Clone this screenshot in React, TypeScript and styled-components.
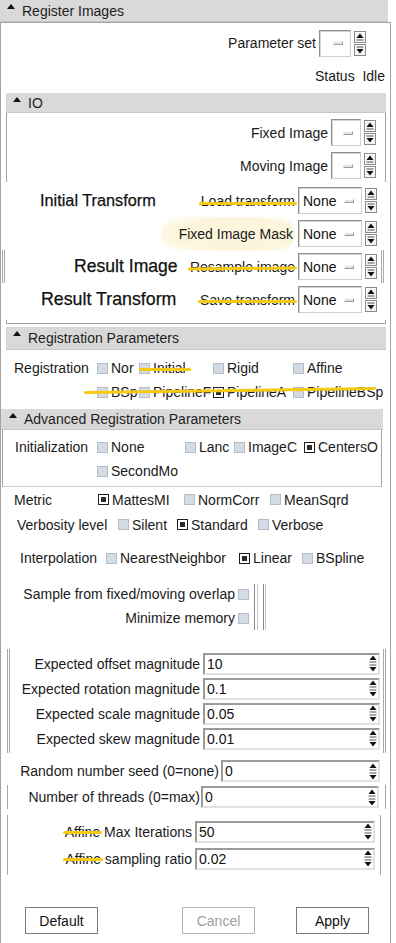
import React from "react";
import styled, { createGlobalStyle, css } from "styled-components";

const GlobalStyle = createGlobalStyle`
  html, body {
    margin: 0;
    padding: 0;
    background: #fff;
  }
  body {
    font-family: "Liberation Sans", Arial, sans-serif;
    font-size: 14px;
    color: #1a1a1a;
  }
`;

const Page = styled.div`
  width: 396px;
  height: 943px;
  overflow: hidden;
  background: #fff;
`;

const Bar = styled.div<{ $left?: number; $right?: number; $h?: number; $pad?: number }>`
  box-sizing: border-box;
  display: flex;
  align-items: center;
  gap: 7px;
  height: ${(p) => p.$h ?? 21}px;
  margin: 0 ${(p) => p.$right ?? 0}px 0 ${(p) => p.$left ?? 0}px;
  padding-left: ${(p) => p.$pad ?? 7}px;
  background: #d9d9d9;
  border-bottom: 1px solid #c6c6c6;
  font-size: 14px;
  color: #1e1e1e;
  white-space: nowrap;
`;

const Caret = styled.span`
  flex: none;
  width: 0;
  height: 0;
  border-left: 4px solid transparent;
  border-right: 4px solid transparent;
  border-bottom: 5px solid #111;
  align-self: flex-start;
  margin-top: 4px;
`;

const MainFrame = styled.div`
  box-sizing: border-box;
  width: 391px;
  height: 922px;
  border: 1px solid #a2a2a2;
  border-bottom: none;
`;

const RightRow = styled.div<{ $h: number; $pr: number }>`
  display: flex;
  align-items: center;
  justify-content: flex-end;
  gap: 3px;
  height: ${(p) => p.$h}px;
  padding-right: ${(p) => p.$pr}px;
  white-space: nowrap;
`;

const Combo = styled.div<{ $w: number }>`
  box-sizing: border-box;
  flex: none;
  width: ${(p) => p.$w}px;
  height: 27px;
  display: flex;
  align-items: center;
  justify-content: space-between;
  padding: 0 7px 0 4px;
  background: #fff;
  border: 1px solid #8e8e8e;
  border-right-color: #cfcfcf;
  border-bottom-color: #cfcfcf;
  box-shadow: inset 1px 1px 0 #d4d4d4;
  font-size: 14px;
  color: #111;
`;

const Dash = styled.span`
  box-sizing: border-box;
  width: 10px;
  height: 4px;
  margin-left: auto;
  background: #e4e4e4;
  border: 1px solid;
  border-color: #fafafa #9a9a9a #9a9a9a #fafafa;
`;

const SpinCol = styled.div`
  flex: none;
  display: flex;
  flex-direction: column;
  gap: 1px;
`;

const SpinBtn = styled.div`
  box-sizing: border-box;
  width: 12px;
  height: 12px;
  display: flex;
  align-items: center;
  justify-content: center;
  background: #f4f4f4;
  border: 1px solid #8a8a8a;
  box-shadow: inset 1px 1px 0 #fff;
`;

const Arrow = ({ down }: { down?: boolean }) => (
  <svg width="8" height="8" viewBox="0 0 8 8">
    {down ? (
      <>
        <line x1="0.5" y1="1" x2="7.5" y2="1" stroke="#555" strokeWidth="1" />
        <polygon points="0.5,3 7.5,3 4,7.5" fill="#111" />
      </>
    ) : (
      <>
        <polygon points="4,0.5 7.5,5 0.5,5" fill="#111" />
        <line x1="0.5" y1="7" x2="7.5" y2="7" stroke="#555" strokeWidth="1" />
      </>
    )}
  </svg>
);

const Spinner = () => (
  <SpinCol>
    <SpinBtn>
      <Arrow />
    </SpinBtn>
    <SpinBtn>
      <Arrow down />
    </SpinBtn>
  </SpinCol>
);

const SubBox = styled.div<{ $pt?: number; $pb?: number }>`
  margin: 0 4px 0 5px;
  padding: ${(p) => p.$pt ?? 0}px 0 ${(p) => p.$pb ?? 0}px;
  border-left: 1px solid #a2a2a2;
  border-right: 1px solid #a2a2a2;
`;

const Overlay = styled.div`
  padding: 2px 0 4px;
`;

const OverlayRow = styled.div<{ $indent: number; $framed?: boolean }>`
  box-sizing: border-box;
  display: flex;
  align-items: center;
  height: 33px;
  padding: 0 13px 0 ${(p) => p.$indent}px;
  ${(p) =>
    p.$framed &&
    css`
      border-left: 3px double #a8a8a8;
      border-right: 3px double #a8a8a8;
      margin: 0 6px 0 1px;
      padding-left: ${p.$indent - 4}px;
      padding-right: 4px;
    `}
`;

const BigLabel = styled.span<{ $size: number }>`
  font-family: Arial, "Liberation Sans", sans-serif;
  font-size: ${(p) => p.$size}px;
  color: #111;
  -webkit-text-stroke: 0.25px #111;
  white-space: nowrap;
`;

const RightGroup = styled.div`
  margin-left: auto;
  display: flex;
  align-items: center;
  gap: 3px;
`;

const highlight = css<{ $tilt?: number; $top?: number }>`
  content: "";
  position: absolute;
  top: ${(p) => p.$top ?? 55}%;
  height: 3px;
  border-radius: 2px;
  background: #f6c915;
  transform: rotate(${(p) => p.$tilt ?? 0}deg);
`;

const Struck = styled.span<{ $tilt?: number; $top?: number }>`
  position: relative;
  white-space: nowrap;
  &::after {
    ${highlight};
    left: -2px;
    right: -2px;
  }
`;

const Glow = styled.span`
  padding: 9px 2px 9px 18px;
  border-radius: 18px;
  background: radial-gradient(ellipse at 55% 50%, #fcf5dc 60%, #fefbee 85%, #fff 100%);
  white-space: nowrap;
`;

const Closer = styled.div`
  height: 3px;
  margin: 0 4px 3px 5px;
  border: 1px solid #a2a2a2;
  border-top: none;
`;

const ChoiceGrid = styled.div<{ $cols: string; $pl: number; $rh?: number }>`
  position: relative;
  display: grid;
  grid-template-columns: ${(p) => p.$cols};
  grid-auto-rows: ${(p) => p.$rh ?? 24}px;
  align-items: center;
  padding-left: ${(p) => p.$pl}px;
  white-space: nowrap;
`;

const Option = styled.span<{ $struck?: number; $tilt?: number; $top?: number }>`
  position: relative;
  display: flex;
  align-items: center;
  gap: 3px;
  margin-right: 1px;
  overflow: hidden;
  white-space: nowrap;
  ${(p) =>
    p.$struck &&
    css`
      &::after {
        ${highlight};
        left: 0;
        width: ${p.$struck}px;
      }
    `}
`;

const Check = styled.span<{ $on?: boolean }>`
  position: relative;
  flex: none;
  box-sizing: border-box;
  width: 11px;
  height: 11px;
  border: 1px solid ${(p) => (p.$on ? "#1e1e1e" : "#b4bdc8")};
  background: ${(p) => (p.$on ? "#fff" : "#d3dbe5")};
  ${(p) =>
    p.$on &&
    css`
      &::after {
        content: "";
        position: absolute;
        inset: 2px;
        background: #2a2a2a;
      }
    `}
`;

const Marker = styled.span`
  position: absolute;
  left: 83px;
  top: 39px;
  width: 292px;
  height: 3px;
  border-radius: 2px;
  background: #f6c915;
  transform: rotate(-0.8deg);
`;

const AdvBox = styled.div`
  margin: 0 8px 0 1px;
  padding: 5px 0 3px;
  border-left: 1px solid #a2a2a2;
  border-right: 1px solid #a2a2a2;
  border-bottom: 1px solid #d0d0d0;
`;

const CheckBlock = styled.div`
  display: grid;
  grid-template-columns: 234px 11px auto;
  grid-template-rows: 24px 24px;
  column-gap: 3px;
  align-items: center;
  margin-top: 12px;
`;

const RightLabel = styled.span`
  text-align: right;
  white-space: nowrap;
`;

const Splitter = styled.div`
  grid-column: 3;
  grid-row: 1 / 3;
  align-self: stretch;
  display: flex;
  gap: 5px;
  padding: 2px 0 0 2px;
`;

const Grip = styled.span<{ $w: number }>`
  width: ${(p) => p.$w}px;
  border-left: 1px solid #8a8a8a;
  border-right: 1px solid #c4c4c4;
`;

const FieldBox = styled.div<{ $ml: number; $mr: number; $double?: boolean; $mt?: number; $pv?: number }>`
  margin: ${(p) => p.$mt ?? 0}px ${(p) => p.$mr}px 0 ${(p) => p.$ml}px;
  padding: ${(p) => p.$pv ?? 0}px 0;
  border-left: ${(p) => (p.$double ? "3px double #a8a8a8" : "1px solid #a8a8a8")};
  border-right: ${(p) => (p.$double ? "3px double #a8a8a8" : "1px solid #a8a8a8")};
`;

const FieldRow = styled.div<{ $label: number; $input: number; $h: number; $gap?: number }>`
  display: grid;
  grid-template-columns: ${(p) => p.$label}px ${(p) => p.$input}px;
  column-gap: ${(p) => p.$gap ?? 3}px;
  align-items: center;
  height: ${(p) => p.$h}px;
`;

const LineEdit = styled.div`
  box-sizing: border-box;
  height: 22px;
  display: flex;
  align-items: center;
  padding-left: 2px;
  background: #fff;
  border: 2px solid #9a9a9a;
  border-right-color: #e2e2e2;
  border-bottom-color: #e2e2e2;
  font-size: 14px;
  color: #111;
`;

const InlineSpin = styled.div`
  margin-left: auto;
  margin-right: 1px;
  display: flex;
  flex-direction: column;
  gap: 1px;
`;

const SpinField = ({ value }: { value: string }) => (
  <LineEdit>
    {value}
    <InlineSpin>
      <Arrow />
      <Arrow down />
    </InlineSpin>
  </LineEdit>
);

const ButtonRow = styled.div`
  display: flex;
  align-items: center;
  margin-top: 32px;
  padding: 0 21px 0 24px;
`;

const Button = styled.button<{ $muted?: boolean; $push?: boolean }>`
  box-sizing: border-box;
  width: 73px;
  height: 27px;
  padding: 0;
  background: #fff;
  border: 1px solid ${(p) => (p.$muted ? "#b4b4b4" : "#7c7c7c")};
  font-family: "Liberation Sans", Arial, sans-serif;
  font-size: 14px;
  color: ${(p) => (p.$muted ? "#a0a0a0" : "#111")};
  ${(p) =>
    p.$push &&
    css`
      margin: 0 41px 0 auto;
    `}
`;

type Choice = { text: string; on?: boolean };

// labels are shown as the clipped widget text reads in the screenshot
const Choices = ({ items }: { items: Choice[] }) => (
  <>
    {items.map((c, i) => (
      <Option key={i}>
        <Check $on={c.on} />
        {c.text}
      </Option>
    ))}
  </>
);

export default function App() {
  return (
    <Page>
      <GlobalStyle />
      <Bar $right={8} $h={22}>
        <Caret />
        Register Images
      </Bar>
      <MainFrame>
        <RightRow $h={40} $pr={24}>
          Parameter set
          <Combo $w={32}>
            <Dash />
          </Combo>
          <Spinner />
        </RightRow>
        <RightRow $h={26} $pr={5}>
          Status&nbsp;&nbsp;Idle
        </RightRow>

        <Bar $left={5} $right={4} $h={20} style={{ marginTop: 4 }}>
          <Caret />
          IO
        </Bar>
        <SubBox $pt={3}>
          <RightRow $h={33} $pr={9}>
            Fixed Image
            <Combo $w={30}>
              <Dash />
            </Combo>
            <Spinner />
          </RightRow>
          <RightRow $h={33} $pr={9}>
            Moving Image
            <Combo $w={30}>
              <Dash />
            </Combo>
            <Spinner />
          </RightRow>
        </SubBox>

        <Overlay>
          <OverlayRow $indent={39}>
            <BigLabel $size={16.3}>Initial Transform</BigLabel>
            <RightGroup>
              <Struck $top={62}>Load transform</Struck>
              <Combo $w={64}>
                None
                <Dash />
              </Combo>
              <Spinner />
            </RightGroup>
          </OverlayRow>
          <OverlayRow $indent={39}>
            <RightGroup>
              <Glow>Fixed Image Mask</Glow>
              <Combo $w={64}>
                None
                <Dash />
              </Combo>
              <Spinner />
            </RightGroup>
          </OverlayRow>
          <OverlayRow $indent={73} $framed>
            <BigLabel $size={17.6}>Result Image</BigLabel>
            <RightGroup>
              <Struck $top={50} $tilt={-0.6}>
                Resample image
              </Struck>
              <Combo $w={64}>
                None
                <Dash />
              </Combo>
              <Spinner />
            </RightGroup>
          </OverlayRow>
          <OverlayRow $indent={40}>
            <BigLabel $size={17.8}>Result Transform</BigLabel>
            <RightGroup>
              <Struck $top={55}>Save transform</Struck>
              <Combo $w={64}>
                None
                <Dash />
              </Combo>
              <Spinner />
            </RightGroup>
          </OverlayRow>
        </Overlay>
        <Closer />

        <Bar $left={5} $right={4} $h={23}>
          <Caret />
          Registration Parameters
        </Bar>
        <ChoiceGrid $cols="83px 42px 74px 80px 96px" $pl={13} style={{ paddingTop: 6 }}>
          <span>Registration</span>
          <Option>
            <Check />
            Nor
          </Option>
          <Option $struck={52} $top={50}>
            <Check />
            Initial
          </Option>
          <Option>
            <Check />
            Rigid
          </Option>
          <Option>
            <Check />
            Affine
          </Option>
          <span />
          <Choices
            items={[
              { text: "BSp" },
              { text: "PipelineF" },
              { text: "PipelineA", on: true },
              { text: "PipelineBSp" },
            ]}
          />
          <Marker />
        </ChoiceGrid>

        <Bar $left={0} $right={7} $h={21} $pad={8} style={{ marginTop: 5 }}>
          <Caret />
          Advanced Registration Parameters
        </Bar>
        <AdvBox>
          <ChoiceGrid $cols="82px 88px 49px 70px 79px" $pl={12}>
            <span>Initialization</span>
            <Choices
              items={[
                { text: "None" },
                { text: "Lanc" },
                { text: "ImageC" },
                { text: "CentersO", on: true },
              ]}
            />
            <span />
            <Option>
              <Check />
              SecondMo
            </Option>
          </ChoiceGrid>
        </AdvBox>
        <ChoiceGrid $cols="84px 86px 86px 100px" $pl={13} $rh={25}>
          <span>Metric</span>
          <Choices
            items={[{ text: "MattesMI", on: true }, { text: "NormCorr" }, { text: "MeanSqrd" }]}
          />
        </ChoiceGrid>
        <ChoiceGrid $cols="101px 59px 81px 100px" $pl={16} $rh={25}>
          <span>Verbosity level</span>
          <Choices items={[{ text: "Silent" }, { text: "Standard", on: true }, { text: "Verbose" }]} />
        </ChoiceGrid>
        <ChoiceGrid $cols="86px 133px 63px 90px" $pl={19} style={{ marginTop: 9 }}>
          <span>Interpolation</span>
          <Choices
            items={[{ text: "NearestNeighbor" }, { text: "Linear", on: true }, { text: "BSpline" }]}
          />
        </ChoiceGrid>

        <CheckBlock>
          <RightLabel>Sample from fixed/moving overlap</RightLabel>
          <Check />
          <Splitter>
            <Grip $w={2} />
            <Grip $w={1} />
          </Splitter>
          <RightLabel>Minimize memory</RightLabel>
          <Check />
        </CheckBlock>

        <FieldBox $ml={6} $mr={4} $double $mt={19} $pv={2}>
          <FieldRow $label={190} $input={177} $h={25}>
            <RightLabel>Expected offset magnitude</RightLabel>
            <SpinField value="10" />
          </FieldRow>
          <FieldRow $label={190} $input={177} $h={25}>
            <RightLabel>Expected rotation magnitude</RightLabel>
            <SpinField value="0.1" />
          </FieldRow>
          <FieldRow $label={190} $input={177} $h={25}>
            <RightLabel>Expected scale magnitude</RightLabel>
            <SpinField value="0.05" />
          </FieldRow>
          <FieldRow $label={190} $input={177} $h={25}>
            <RightLabel>Expected skew magnitude</RightLabel>
            <SpinField value="0.01" />
          </FieldRow>
        </FieldBox>

        <FieldRow $label={218} $input={159} $h={24} $gap={2} style={{ marginTop: 6 }}>
          <RightLabel>Random number seed (0=none)</RightLabel>
          <SpinField value="0" />
        </FieldRow>
        <FieldBox $ml={6} $mr={4} $mt={2}>
          <FieldRow $label={192} $input={178} $h={24} $gap={1}>
            <RightLabel>Number of threads (0=max)</RightLabel>
            <SpinField value="0" />
          </FieldRow>
        </FieldBox>

        <FieldBox $ml={6} $mr={9} $mt={6} $pv={3}>
          <FieldRow $label={184} $input={180} $h={27} $gap={3}>
            <RightLabel>
              <Struck $top={48}>Affine</Struck> Max Iterations
            </RightLabel>
            <SpinField value="50" />
          </FieldRow>
          <FieldRow $label={184} $input={180} $h={27} $gap={3}>
            <RightLabel>
              <Struck $top={48}>Affine</Struck> sampling ratio
            </RightLabel>
            <SpinField value="0.02" />
          </FieldRow>
        </FieldBox>

        <ButtonRow>
          <Button>Default</Button>
          <Button $muted $push>
            Cancel
          </Button>
          <Button>Apply</Button>
        </ButtonRow>
      </MainFrame>
    </Page>
  );
}
